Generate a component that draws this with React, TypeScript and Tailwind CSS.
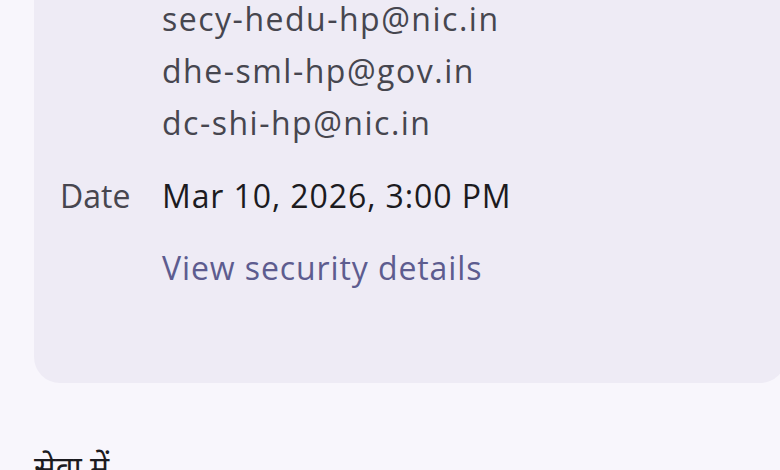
const recipients = ["secy-hedu-hp@nic.in", "dhe-sml-hp@gov.in", "dc-shi-hp@nic.in"];

export default function App() {
	return (
		<div className="h-[470px] w-[780px] overflow-hidden bg-[#f8f6fc] font-['Open_Sans',sans-serif]">
			<div className="mt-[-30px] ml-[34px] mr-[-6px] rounded-[26px] bg-[#eeebf5] pt-[23px] pb-[89px] pl-[26px]">
				<div className="grid grid-cols-[102px_1fr] text-[32px] leading-[52px] tracking-[0.9px]">
					<div />
					<div className="flex flex-col tracking-[1.5px] text-[#46464f]">
						{recipients.map((r) => (
							<span key={r}>{r}</span>
						))}
					</div>

					<div className="mt-[21px] tracking-normal text-[#47464f]">Date</div>
					<div className="mt-[21px] text-[#1c1b1f]">Mar 10, 2026, 3:00 PM</div>

					<div />
					<div className="mt-[20px] text-[#5d5c8f]">View security details</div>
				</div>
			</div>

			<p className="mt-[62px] ml-[34px] text-[32px] leading-[44px] text-[#1c1b1f] font-['Noto_Sans','Noto_Sans_Devanagari',sans-serif]">
				सेवा में
			</p>
		</div>
	);
}
